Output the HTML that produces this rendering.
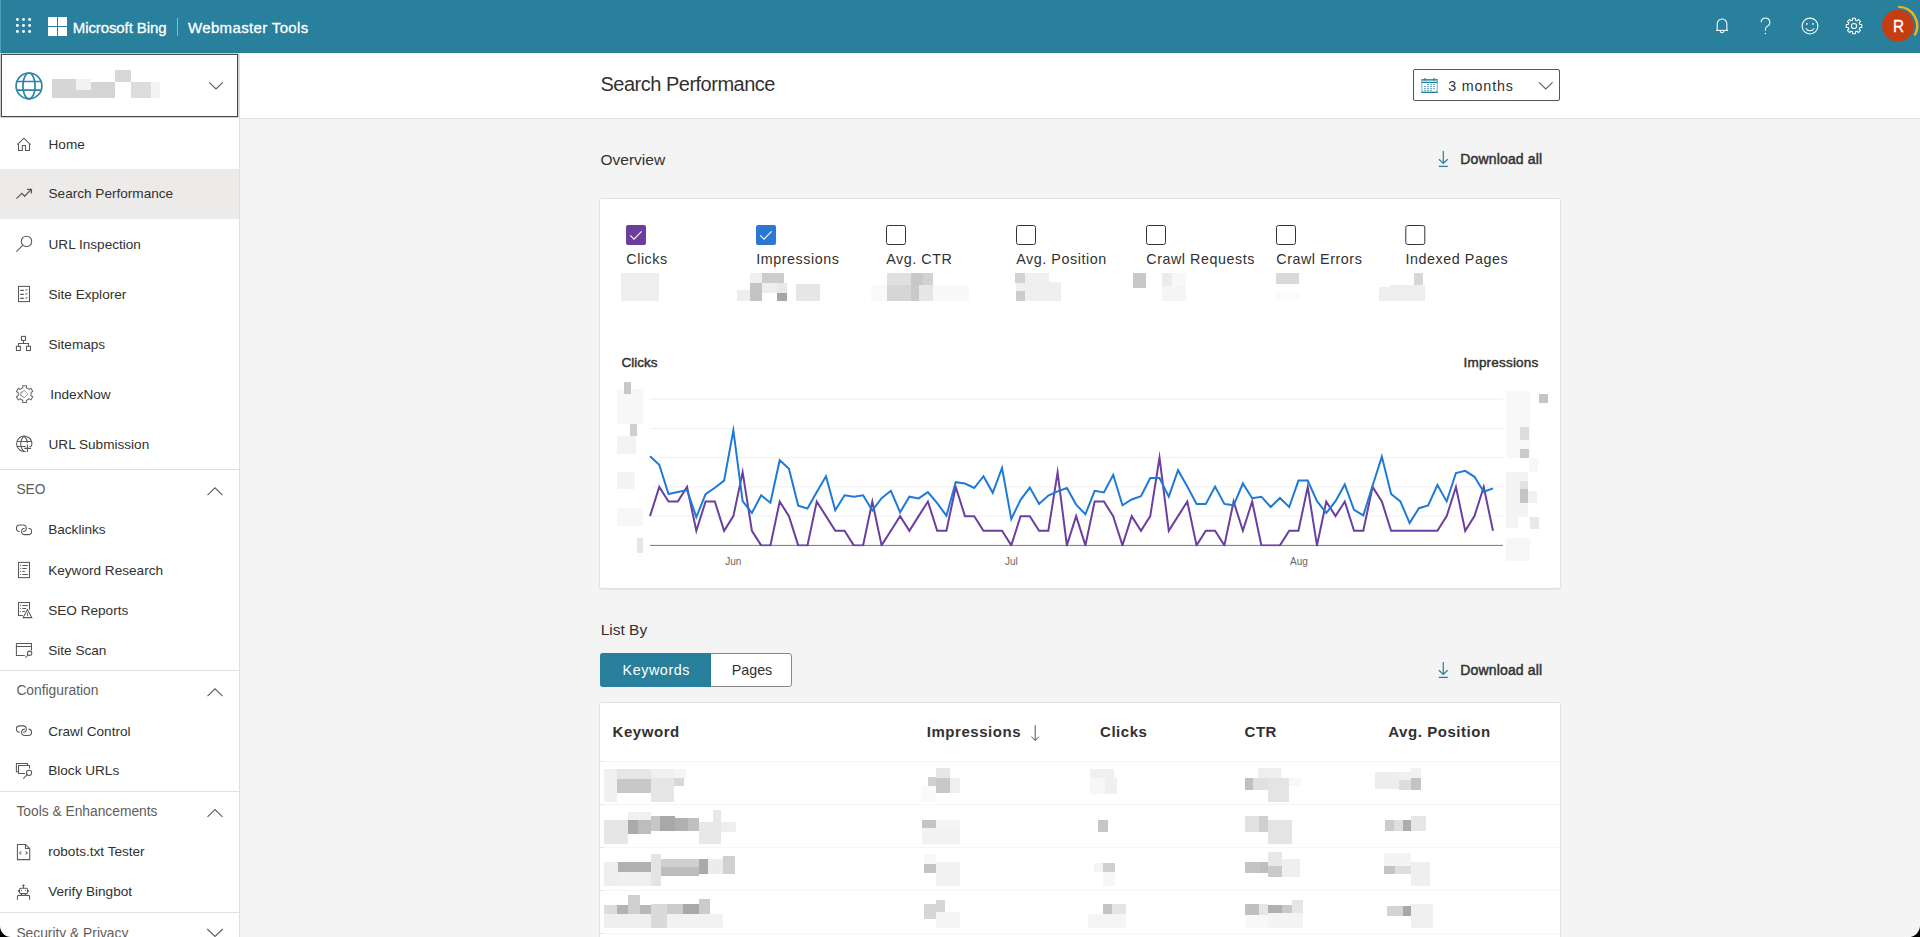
<!DOCTYPE html><html><head><meta charset="utf-8"><style>
html,body{margin:0;padding:0;width:1920px;height:937px;overflow:hidden;background:#f4f4f4;font-family:"Liberation Sans",sans-serif;}
.t{position:absolute;white-space:nowrap;}
.r{position:absolute;}
svg{position:absolute;overflow:visible;}
</style></head><body>
<div class="r" style="left:240px;top:53px;width:1680px;height:65px;background:#ffffff;"></div>
<div class="r" style="left:240px;top:118px;width:1680px;height:1px;background:#e1dfdd;"></div>
<div class="r" style="left:0px;top:0px;width:1920px;height:53px;background:#28809d;"></div>
<div class="r" style="left:0px;top:52px;width:1920px;height:1px;background:#267b96;"></div>
<div class="r" style="left:0px;top:0px;width:1px;height:53px;background:#4e9eb7;"></div>
<svg style="left:0;top:0" width="60" height="53"><circle cx="17.4" cy="19.5" r="1.45" fill="#fff"/><circle cx="17.4" cy="25.5" r="1.45" fill="#fff"/><circle cx="17.4" cy="31.5" r="1.45" fill="#fff"/><circle cx="23.5" cy="19.5" r="1.45" fill="#fff"/><circle cx="23.5" cy="25.5" r="1.45" fill="#fff"/><circle cx="23.5" cy="31.5" r="1.45" fill="#fff"/><circle cx="29.6" cy="19.5" r="1.45" fill="#fff"/><circle cx="29.6" cy="25.5" r="1.45" fill="#fff"/><circle cx="29.6" cy="31.5" r="1.45" fill="#fff"/><rect x="48" y="17" width="9" height="9" fill="#fff"/><rect x="58" y="17" width="9" height="9" fill="#fff"/><rect x="48" y="27" width="9" height="9" fill="#fff"/><rect x="58" y="27" width="9" height="9" fill="#fff"/></svg>
<div class="t" style="left:72.80px;top:19.70px;font-size:15px;line-height:15px;color:#fff;font-weight:400;letter-spacing:-0.1px;-webkit-text-stroke:0.3px #fff;">Microsoft Bing</div>
<div class="r" style="left:177px;top:18px;width:1px;height:18px;background:rgba(255,255,255,0.45);"></div>
<div class="t" style="left:188.00px;top:19.70px;font-size:15px;line-height:15px;color:#fff;font-weight:400;letter-spacing:0.35px;-webkit-text-stroke:0.3px #fff;">Webmaster Tools</div>
<svg style="left:0;top:0" width="1920" height="53">
<g fill="none" stroke="#fff" stroke-width="1.05">
<path d="M1717.2 30.4 V23.9 a4.85 4.85 0 0 1 9.7 0 V30.4"/>
<path d="M1716 30.4 H1728"/>
<path d="M1720.3 30.9 a1.75 1.75 0 0 0 3.5 0"/>
<path d="M1761.2 22.2 a4.3 4.3 0 1 1 6.3 3.9 c-1.3 0.8 -2.1 1.6 -2.1 3.0 v1.7"/>
<circle cx="1810" cy="26" r="7.9"/>
<path d="M1805.8 28.2 a4.8 4.8 0 0 0 8.4 0"/>
</g>
<circle cx="1765.4" cy="33.4" r="0.75" fill="#fff"/>
<circle cx="1806.9" cy="23.9" r="0.85" fill="#fff"/>
<circle cx="1813" cy="23.9" r="0.85" fill="#fff"/>
</svg>
<svg style="left:0;top:0" width="1920" height="53"><path d="M1852.54 20.18 L1852.46 18.25 L1855.54 18.25 L1855.46 20.18 L1857.08 20.85 L1858.39 19.43 L1860.57 21.61 L1859.15 22.92 L1859.82 24.54 L1861.75 24.46 L1861.75 27.54 L1859.82 27.46 L1859.15 29.08 L1860.57 30.39 L1858.39 32.57 L1857.08 31.15 L1855.46 31.82 L1855.54 33.75 L1852.46 33.75 L1852.54 31.82 L1850.92 31.15 L1849.61 32.57 L1847.43 30.39 L1848.85 29.08 L1848.18 27.46 L1846.25 27.54 L1846.25 24.46 L1848.18 24.54 L1848.85 22.92 L1847.43 21.61 L1849.61 19.43 L1850.92 20.85 Z" fill="none" stroke="#fff" stroke-width="1.05" stroke-linejoin="round"/><circle cx="1854" cy="26" r="2.6" fill="none" stroke="#fff" stroke-width="1.05"/><path d="M1898.3 6.9 A19 19 0 0 1 1914.6 35.5" fill="none" stroke="#f5b21a" stroke-width="2.4"/><circle cx="1898" cy="25.7" r="15.9" fill="#c53d10"/></svg>
<div class="t" style="left:1892.60px;top:17.71px;font-size:17px;line-height:17px;color:#fff;font-weight:400;letter-spacing:0px;-webkit-text-stroke:0.35px #fff;transform:scaleX(0.9);transform-origin:0 0;">R</div>
<div class="r" style="left:0px;top:53px;width:239px;height:884px;background:#ffffff;"></div>
<div class="r" style="left:239px;top:53px;width:1px;height:884px;background:#e1dfdd;"></div>
<div class="r" style="left:1px;top:54px;width:235px;height:61px;background:transparent;border:1px solid #4a4a4a;box-shadow:0 0 0 0.6px rgba(74,74,74,0.45);"></div>
<svg style="left:0;top:0" width="240" height="120"><g fill="none" stroke="#2a86a4" stroke-width="1.7"><circle cx="29" cy="85.9" r="12.9"/><ellipse cx="29" cy="85.9" rx="6.1" ry="12.9"/><path d="M17.2 81.5 H40.8 M17.2 90.2 H40.8"/></g><path d="M209.2 82.3 L216 89 L222.8 82.3" fill="none" stroke="#605e5c" stroke-width="1.1"/></svg>
<div class="r" style="left:52.1px;top:79.3px;width:23.7px;height:18.6px;background:#d6d6d6"></div><div class="r" style="left:75.8px;top:79.3px;width:15.2px;height:10.5px;background:#f2f2f2"></div><div class="r" style="left:75.8px;top:89.8px;width:15.2px;height:8.1px;background:#d6d6d6"></div><div class="r" style="left:91px;top:82.2px;width:24.0px;height:15.7px;background:#d4d4d4"></div><div class="r" style="left:115px;top:70.1px;width:16.0px;height:11.9px;background:#d8d8d8"></div><div class="r" style="left:131px;top:82.2px;width:20.0px;height:15.7px;background:#dddddd"></div><div class="r" style="left:151px;top:82.2px;width:9.0px;height:15.7px;background:#f4f4f4"></div>
<div class="r" style="left:0px;top:169px;width:239px;height:50px;background:#edebe9;"></div>
<div class="t" style="left:48.50px;top:137.59px;font-size:13.6px;line-height:13.6px;color:#323130;font-weight:400;letter-spacing:0px;">Home</div>
<div class="t" style="left:48.50px;top:187.19px;font-size:13.6px;line-height:13.6px;color:#323130;font-weight:400;letter-spacing:0px;">Search Performance</div>
<div class="t" style="left:48.50px;top:237.59px;font-size:13.6px;line-height:13.6px;color:#323130;font-weight:400;letter-spacing:0px;">URL Inspection</div>
<div class="t" style="left:48.50px;top:287.59px;font-size:13.6px;line-height:13.6px;color:#323130;font-weight:400;letter-spacing:0px;">Site Explorer</div>
<div class="t" style="left:48.50px;top:337.59px;font-size:13.6px;line-height:13.6px;color:#323130;font-weight:400;letter-spacing:0px;">Sitemaps</div>
<div class="t" style="left:50.20px;top:387.59px;font-size:13.6px;line-height:13.6px;color:#323130;font-weight:400;letter-spacing:0px;">IndexNow</div>
<div class="t" style="left:48.50px;top:437.59px;font-size:13.6px;line-height:13.6px;color:#323130;font-weight:400;letter-spacing:0px;">URL Submission</div>
<div class="r" style="left:0px;top:469px;width:239px;height:1px;background:#e1dfdd;"></div>
<div class="t" style="left:16.40px;top:483.42px;font-size:13.8px;line-height:13.8px;color:#605e5c;font-weight:400;letter-spacing:0px;">SEO</div>
<div class="t" style="left:48.20px;top:523.49px;font-size:13.6px;line-height:13.6px;color:#323130;font-weight:400;letter-spacing:0px;">Backlinks</div>
<div class="t" style="left:48.20px;top:563.79px;font-size:13.6px;line-height:13.6px;color:#323130;font-weight:400;letter-spacing:0px;">Keyword Research</div>
<div class="t" style="left:48.20px;top:603.79px;font-size:13.6px;line-height:13.6px;color:#323130;font-weight:400;letter-spacing:0px;">SEO Reports</div>
<div class="t" style="left:48.20px;top:643.79px;font-size:13.6px;line-height:13.6px;color:#323130;font-weight:400;letter-spacing:0px;">Site Scan</div>
<div class="r" style="left:0px;top:670px;width:239px;height:1px;background:#e1dfdd;"></div>
<div class="t" style="left:16.40px;top:684.22px;font-size:13.8px;line-height:13.8px;color:#605e5c;font-weight:400;letter-spacing:0px;">Configuration</div>
<div class="t" style="left:48.20px;top:724.69px;font-size:13.6px;line-height:13.6px;color:#323130;font-weight:400;letter-spacing:0px;">Crawl Control</div>
<div class="t" style="left:48.20px;top:764.49px;font-size:13.6px;line-height:13.6px;color:#323130;font-weight:400;letter-spacing:0px;">Block URLs</div>
<div class="r" style="left:0px;top:791px;width:239px;height:1px;background:#e1dfdd;"></div>
<div class="t" style="left:16.40px;top:804.92px;font-size:13.8px;line-height:13.8px;color:#605e5c;font-weight:400;letter-spacing:0px;">Tools &amp; Enhancements</div>
<div class="t" style="left:48.20px;top:845.39px;font-size:13.6px;line-height:13.6px;color:#323130;font-weight:400;letter-spacing:0px;">robots.txt Tester</div>
<div class="t" style="left:48.20px;top:885.19px;font-size:13.6px;line-height:13.6px;color:#323130;font-weight:400;letter-spacing:0px;">Verify Bingbot</div>
<div class="r" style="left:0px;top:912px;width:239px;height:1px;background:#e1dfdd;"></div>
<div class="t" style="left:16.40px;top:927.12px;font-size:13.8px;line-height:13.8px;color:#605e5c;font-weight:400;letter-spacing:0px;">Security &amp; Privacy</div>
<svg style="left:0;top:0" width="240" height="937"><g fill="none" stroke="#595959" stroke-width="1.05" stroke-linecap="butt" stroke-linejoin="miter">
<path d="M17.4 144.6 L23.95 138.2 L30.5 144.6"/>
<path d="M18.5 143.4 V150.5 H22.3 V145.4 H25.5 V150.5 H29.5 V143.4"/>
<path d="M16.4 198.6 L21.85 193.4 L24.57 196.2 L31.1 189.6" stroke-width="1.3"/>
<path d="M27 189.3 H31.4 V193.6" stroke-width="1.3"/>
<circle cx="26.5" cy="241.4" r="5.2"/>
<path d="M22.7 245.3 L16.4 251.6"/>
<rect x="18.5" y="286.4" width="11" height="15.2"/>
<path d="M20.2 290.4 H23.8 M20.2 294.4 H23.8 M20.2 298.4 H23.8" stroke-width="1.1"/>
<path d="M25.3 290.5 L27.4 289.2 M25.3 294.5 L27.4 293.2 M25.3 298.5 L27.4 297.2" stroke="#8a8a8a" stroke-width="1.2"/>
<rect x="21.45" y="336.4" width="4.1" height="4"/>
<rect x="16.4" y="346.3" width="4" height="4.2"/>
<rect x="26.5" y="346.3" width="4" height="4.2"/>
<path d="M23.5 340.4 V343.4 M18.5 346.3 V343.4 H28.5 V346.3"/>
<path d="M22.81 387.75 L22.72 385.71 L26.48 385.71 L26.39 387.75 L29.21 389.37 L30.93 388.28 L32.81 391.53 L31.00 392.48 L31.00 395.72 L32.81 396.67 L30.93 399.92 L29.21 398.83 L26.39 400.45 L26.48 402.49 L22.72 402.49 L22.81 400.45 L19.99 398.83 L18.27 399.92 L16.39 396.67 L18.20 395.72 L18.20 392.48 L16.39 391.53 L18.27 388.28 L19.99 389.37 Z" stroke-linejoin="round" stroke="#6a6a6a"/>
<path d="M24 390.2 L28 394.1 L24 398 L20.6 394.1 Z M23.2 391.5 a3 2.6 0 0 0 0 5.2" stroke="#9a9a9a" stroke-width="0.9"/>
<path d="M25.8 451.3 a7.7 7.7 0 1 1 5.7 -4.9"/>
<path d="M24.1 436.1 c-2.2 1.9 -3.4 4.6 -3.4 7.7 c0 3.1 1.3 5.9 3.5 7.8 M24.1 436.1 c2.0 1.7 3.2 4.1 3.4 6.9"/>
<path d="M16.9 441.4 H31.2 M16.9 446.5 H25.6 M29.5 446.5 H31.2"/>
<path d="M27.45 444.5 V452 M24.3 448.4 H31.1" stroke-width="1.1"/>
<path d="M19.8 531.40 H19.6 a3.2 3.2 0 0 1 0 -6.4 H23.1 a3.2 3.2 0 0 1 0 6.4 H23.2" transform="translate(0,0)"/><path d="M24.2 528.20 H24.8 a3.2 3.2 0 0 0 0 6.4 H28.4 a3.2 3.2 0 0 0 0 -6.4 H28.6"/>
<path d="M19.8 732.30 H19.6 a3.2 3.2 0 0 1 0 -6.4 H23.1 a3.2 3.2 0 0 1 0 6.4 H23.2" transform="translate(0,0)"/><path d="M24.2 729.10 H24.8 a3.2 3.2 0 0 0 0 6.4 H28.4 a3.2 3.2 0 0 0 0 -6.4 H28.6"/>
<rect x="18.5" y="562.4" width="11" height="15.2"/>
<path d="M22.3 565.4 H27.8 M22.3 568.5 H26.8 M22.3 571.5 H24.9 M22.3 574.5 H27.8"/>
<path d="M20.0 565.4 h0.8 M20.0 568.5 h0.8 M20.0 571.5 h0.8 M20.0 574.5 h0.8" stroke-width="1.2"/>
<path d="M22.9 615.5 H18.5 V602.4 H29.5 V609.8"/>
<path d="M22.3 605.4 H27.8 M22.3 608.5 H26.2 M22.3 611.5 H24.9"/>
<path d="M20.0 605.4 h0.8 M20.0 608.5 h0.8 M20.0 611.5 h0.8" stroke-width="1.2"/>
<path d="M27.45 609.6 L31.8 617.6 H23.1 Z"/>
<path d="M27.45 612.5 V616.2" stroke-width="0.9"/>
<path d="M24.8 655.5 H16.4 V643.5 H31.5 V650.6 M16.4 646.4 H31.5"/>
<circle cx="29.6" cy="653.3" r="2.2"/>
<path d="M28 655 L25.3 657.7"/>
<path d="M18.5 771.7 H16.4 V763.4 H27.45 V765.4"/>
<path d="M25 773.5 H18.5 V765.4 H29.5 V768.6"/>
<circle cx="29.05" cy="772.8" r="2.6"/>
<path d="M27.2 774.7 L23.3 778.6"/>
<path d="M17.4 859.6 V844.4 H25.5 L29.7 848.5 V859.6 Z M25.4 844.4 V848.4 H29.7"/>
<path d="M21.4 851.4 L19.7 852.9 L21.4 854.4 M25.5 851.4 L27.2 852.9 L25.5 854.4" stroke-width="1.15" stroke="#777"/>
<path d="M23.45 888.2 V884.6 M22.2 885.5 H24.7"/>
<rect x="19.5" y="888.2" width="8" height="5.3" rx="1.3"/>
<path d="M19.0 889.9 V891.9 M27.9 889.9 V891.9" stroke-width="1.7"/>
<circle cx="21.5" cy="890.5" r="0.6" fill="#595959" stroke="none"/>
<circle cx="25.5" cy="890.5" r="0.6" fill="#595959" stroke="none"/>
<path d="M21.6 893.5 V895.4 M25.4 893.5 V895.4"/>
<path d="M17.45 899.8 V896.6 a1.2 1.2 0 0 1 1.2 -1.2 H28.4 a1.2 1.2 0 0 1 1.2 1.2 V899.8"/>
</g>
<g fill="none" stroke="#605e5c" stroke-width="1.1">
<path d="M207.5 495.2 L215 487.8 L222.5 495.2"/>
<path d="M207.5 696.2 L215 688.8 L222.5 696.2"/>
<path d="M207.5 816.9 L215 809.5 L222.5 816.9"/>
<path d="M207.2 929 L215 936.5 L222.8 929"/>
</g>
<path d="M0 926 A11 11 0 0 0 11 937 H0 Z" fill="#000"/>
</svg>
<div class="t" style="left:600.50px;top:74.17px;font-size:20px;line-height:20px;color:#323130;font-weight:400;letter-spacing:-0.5px;">Search Performance</div>
<div class="r" style="left:1413px;top:69px;width:145px;height:30px;background:#fff;border:1px solid #555;border-radius:2px;"></div>
<svg style="left:0;top:0" width="1920" height="200"><g fill="none" stroke="#2a7f9e"><rect x="1421.9" y="79.8" width="15.3" height="12.4" stroke="#6fb1c7" stroke-width="1"/><path d="M1421.4 79.8 H1437.8 M1421.6 82.4 H1437.6 M1421.4 92.3 H1437.8" stroke-width="1.3"/><path d="M1425 78.3 V80.5 M1434 78.3 V80.5" stroke-width="1.6"/></g><g fill="#5fa9c2"><rect x="1427.1" y="83.95" width="1.8" height="1.1"/><rect x="1430.1" y="83.95" width="1.8" height="1.1"/><rect x="1433.1" y="83.95" width="1.8" height="1.1"/><rect x="1424.1" y="85.95" width="1.8" height="1.1"/><rect x="1427.1" y="85.95" width="1.8" height="1.1"/><rect x="1430.1" y="85.95" width="1.8" height="1.1"/><rect x="1433.1" y="85.95" width="1.8" height="1.1"/><rect x="1424.1" y="87.95" width="1.8" height="1.1"/><rect x="1427.1" y="87.95" width="1.8" height="1.1"/><rect x="1430.1" y="87.95" width="1.8" height="1.1"/><rect x="1433.1" y="87.95" width="1.8" height="1.1"/><rect x="1424.1" y="89.85000000000001" width="1.8" height="1.1"/><rect x="1427.1" y="89.85000000000001" width="1.8" height="1.1"/><rect x="1430.1" y="89.85000000000001" width="1.8" height="1.1"/></g><path d="M1539 82.3 L1545.8 89 L1552.6 82.3" fill="none" stroke="#605e5c" stroke-width="1.1"/><g fill="none" stroke="#2a7f9e" stroke-width="1.2"><path d="M1443.3 150.9 V163 M1438.9 159.2 L1443.3 163.4 L1447.7 159.2"/><path d="M1438.8 166.4 H1447.8" stroke-width="1.3"/></g><g fill="none" stroke="#2a7f9e" stroke-width="1.2"><path d="M1443.3 661.9 V674 M1438.9 670.2 L1443.3 674.4 L1447.7 670.2"/><path d="M1438.8 677.4 H1447.8" stroke-width="1.3"/></g></svg>
<div class="t" style="left:1448.20px;top:78.70px;font-size:14.3px;line-height:14.3px;color:#323130;font-weight:400;letter-spacing:0.85px;">3 months</div>
<div class="t" style="left:600.50px;top:151.88px;font-size:15.5px;line-height:15.5px;color:#323130;font-weight:400;letter-spacing:0px;">Overview</div>
<div class="t" style="left:1460.30px;top:152.35px;font-size:14px;line-height:14px;color:#323130;font-weight:400;letter-spacing:0.15px;-webkit-text-stroke:0.45px #323130;">Download all</div>
<div class="r" style="left:599px;top:198px;width:960px;height:389px;background:#fff;border:1px solid #e2e2e2;border-radius:2.5px;box-shadow:0 1px 1.5px rgba(0,0,0,.05);"></div>
<div class="t" style="left:626.30px;top:252.00px;font-size:14.3px;line-height:14.3px;color:#323130;font-weight:400;letter-spacing:0.55px;">Clicks</div>
<div class="t" style="left:756.30px;top:252.00px;font-size:14.3px;line-height:14.3px;color:#323130;font-weight:400;letter-spacing:0.55px;">Impressions</div>
<div class="t" style="left:886.30px;top:252.00px;font-size:14.3px;line-height:14.3px;color:#323130;font-weight:400;letter-spacing:0.55px;">Avg. CTR</div>
<div class="t" style="left:1016.30px;top:252.00px;font-size:14.3px;line-height:14.3px;color:#323130;font-weight:400;letter-spacing:0.55px;">Avg. Position</div>
<div class="t" style="left:1146.30px;top:252.00px;font-size:14.3px;line-height:14.3px;color:#323130;font-weight:400;letter-spacing:0.55px;">Crawl Requests</div>
<div class="t" style="left:1276.30px;top:252.00px;font-size:14.3px;line-height:14.3px;color:#323130;font-weight:400;letter-spacing:0.55px;">Crawl Errors</div>
<div class="t" style="left:1405.60px;top:252.00px;font-size:14.3px;line-height:14.3px;color:#323130;font-weight:400;letter-spacing:0.55px;">Indexed Pages</div>
<svg style="left:0;top:0" width="1920" height="300"><rect x="626" y="225" width="20" height="20" rx="2" fill="#6a3d9f"/><path d="M630.2 235.4 L634 239.1 L641.6 231.4" fill="none" stroke="#fff" stroke-width="1.1"/><rect x="756" y="225" width="20" height="20" rx="2" fill="#2b78d4"/><path d="M760.2 235.4 L764 239.1 L771.6 231.4" fill="none" stroke="#fff" stroke-width="1.1"/><rect x="886.5" y="225.5" width="19" height="19" rx="2" fill="none" stroke="#333" stroke-width="1"/><rect x="1016.5" y="225.5" width="19" height="19" rx="2" fill="none" stroke="#333" stroke-width="1"/><rect x="1146.5" y="225.5" width="19" height="19" rx="2" fill="none" stroke="#333" stroke-width="1"/><rect x="1276.5" y="225.5" width="19" height="19" rx="2" fill="none" stroke="#333" stroke-width="1"/><rect x="1405.8" y="225.5" width="19" height="19" rx="2" fill="none" stroke="#333" stroke-width="1"/></svg>
<div class="r" style="left:621px;top:273px;width:38.0px;height:28.0px;background:#eeeeee"></div><div class="r" style="left:737px;top:290px;width:13.0px;height:11.0px;background:#eeeeee"></div><div class="r" style="left:750px;top:273px;width:12.0px;height:10.0px;background:#efefef"></div><div class="r" style="left:762px;top:273px;width:22.0px;height:10.0px;background:#cccccc"></div><div class="r" style="left:750px;top:283px;width:12.0px;height:18.0px;background:#c4c4c4"></div><div class="r" style="left:762px;top:283px;width:15.0px;height:10.0px;background:#eeeeee"></div><div class="r" style="left:777px;top:283px;width:10.0px;height:10.0px;background:#e8e8e8"></div><div class="r" style="left:777px;top:293px;width:10.0px;height:8.0px;background:#a5a5a5"></div><div class="r" style="left:796px;top:284px;width:24.0px;height:17.0px;background:#e6e6e6"></div><div class="r" style="left:871px;top:284.5px;width:16.0px;height:16.5px;background:#fafafa"></div><div class="r" style="left:887px;top:273px;width:24.0px;height:11.5px;background:#e0e0e0"></div><div class="r" style="left:887px;top:284.5px;width:24.0px;height:16.5px;background:#d6d6d6"></div><div class="r" style="left:911px;top:273px;width:11.8px;height:11.5px;background:#c8c8c8"></div><div class="r" style="left:922.8px;top:273px;width:10.2px;height:11.5px;background:#d2d2d2"></div><div class="r" style="left:911px;top:284.5px;width:8.0px;height:16.5px;background:#c9c9c9"></div><div class="r" style="left:919px;top:284.5px;width:14.0px;height:16.5px;background:#e6e6e6"></div><div class="r" style="left:933px;top:285px;width:36.0px;height:16.0px;background:#f9f9f9"></div><div class="r" style="left:1016px;top:282px;width:45.0px;height:19.0px;background:#efefef"></div><div class="r" style="left:1025px;top:273px;width:24.0px;height:9.0px;background:#efefef"></div><div class="r" style="left:1015px;top:273px;width:10.0px;height:9.8px;background:#d2d2d2"></div><div class="r" style="left:1016px;top:291px;width:9.0px;height:10.0px;background:#cccccc"></div><div class="r" style="left:1133px;top:273px;width:13.0px;height:15.0px;background:#c8c8c8"></div><div class="r" style="left:1162px;top:286px;width:24.0px;height:15.0px;background:#f5f5f5"></div><div class="r" style="left:1172px;top:273px;width:14.0px;height:13.0px;background:#f8f8f8"></div><div class="r" style="left:1162px;top:273px;width:10.0px;height:13.0px;background:#ececec"></div><div class="r" style="left:1276px;top:273px;width:23.0px;height:11.0px;background:#d9d9d9"></div><div class="r" style="left:1276px;top:291px;width:23.0px;height:10.0px;background:#fbfbfb"></div><div class="r" style="left:1379px;top:287px;width:46.0px;height:14.0px;background:#eeeeee"></div><div class="r" style="left:1390px;top:285px;width:35.0px;height:2.0px;background:#efefef"></div><div class="r" style="left:1414px;top:273px;width:9.0px;height:12.0px;background:#d6d6d6"></div>
<div class="t" style="left:621.40px;top:355.57px;font-size:13.5px;line-height:13.5px;color:#323130;font-weight:400;letter-spacing:0px;-webkit-text-stroke:0.45px #323130;">Clicks</div>
<div class="t" style="left:1463.50px;top:355.57px;font-size:13.5px;line-height:13.5px;color:#323130;font-weight:400;letter-spacing:0.2px;-webkit-text-stroke:0.45px #323130;">Impressions</div>
<div class="r" style="left:617px;top:389px;width:26.0px;height:34.6px;background:#f7f7f7"></div><div class="r" style="left:624.2px;top:382px;width:6.7px;height:11.6px;background:#c8c8c8"></div><div class="r" style="left:630px;top:423.6px;width:7.0px;height:12.1px;background:#cfcfcf"></div><div class="r" style="left:617px;top:435.7px;width:19.4px;height:18.3px;background:#f3f3f3"></div><div class="r" style="left:617px;top:471.8px;width:18.0px;height:17.6px;background:#f4f4f4"></div><div class="r" style="left:617px;top:507.6px;width:26.0px;height:18.2px;background:#f7f7f7"></div><div class="r" style="left:637px;top:538px;width:6.0px;height:14.7px;background:#e6e6e6"></div><div class="r" style="left:1506px;top:391px;width:23.5px;height:67.0px;background:#f8f8f8"></div><div class="r" style="left:1539.2px;top:394.2px;width:8.9px;height:8.5px;background:#c4c4c4"></div><div class="r" style="left:1520px;top:427px;width:9.0px;height:12.8px;background:#dcdcdc"></div><div class="r" style="left:1520px;top:449px;width:9.0px;height:9.0px;background:#cacaca"></div><div class="r" style="left:1529px;top:458px;width:9.0px;height:14.0px;background:#f7f7f7"></div><div class="r" style="left:1506px;top:472px;width:22.4px;height:44.8px;background:#f4f4f4"></div><div class="r" style="left:1520px;top:481px;width:7.8px;height:8.0px;background:#e2e2e2"></div><div class="r" style="left:1520px;top:489px;width:7.8px;height:13.6px;background:#c4c4c4"></div><div class="r" style="left:1528.4px;top:491px;width:8.6px;height:11.6px;background:#f1f1f1"></div><div class="r" style="left:1506px;top:516.8px;width:11.7px;height:11.2px;background:#f3f3f3"></div><div class="r" style="left:1530px;top:516.8px;width:9.0px;height:12.2px;background:#e8e8e8"></div><div class="r" style="left:1506px;top:538px;width:24.0px;height:23.4px;background:#f7f7f7"></div>
<svg style="left:0;top:0" width="1920" height="937"><line x1="650" y1="399.2" x2="1503" y2="399.2" stroke="#f0f0f0" stroke-width="1"/><line x1="650" y1="428.4" x2="1503" y2="428.4" stroke="#f0f0f0" stroke-width="1"/><line x1="650" y1="457.6" x2="1503" y2="457.6" stroke="#f0f0f0" stroke-width="1"/><line x1="650" y1="486.8" x2="1503" y2="486.8" stroke="#f0f0f0" stroke-width="1"/><line x1="650" y1="516.0" x2="1503" y2="516.0" stroke="#f0f0f0" stroke-width="1"/><line x1="650" y1="545.4" x2="1503" y2="545.4" stroke="#777" stroke-width="1"/><defs><clipPath id="plot"><rect x="600" y="380" width="960" height="166.2"/></clipPath></defs><polyline clip-path="url(#plot)" points="650.00,516.16 659.26,486.92 668.53,501.54 677.79,501.54 687.05,486.92 696.32,530.78 705.58,501.54 714.85,501.54 724.11,530.78 733.37,516.16 742.64,472.30 751.90,530.78 761.16,545.40 770.43,545.40 779.69,501.54 788.96,516.16 798.22,545.40 807.48,545.40 816.75,501.54 826.01,516.16 835.27,530.78 844.54,530.78 853.80,545.40 863.07,545.40 872.33,501.54 881.59,545.40 890.86,530.78 900.12,516.16 909.38,530.78 918.65,516.16 927.91,501.54 937.18,530.78 946.44,530.78 955.70,486.92 964.97,516.16 974.23,516.16 983.49,530.78 992.76,530.78 1002.02,530.78 1011.29,545.40 1020.55,516.16 1029.81,516.16 1039.08,530.78 1048.34,530.78 1057.60,472.30 1066.87,545.40 1076.13,516.16 1085.40,545.40 1094.66,501.54 1103.92,501.54 1113.19,516.16 1122.45,545.40 1131.71,516.16 1140.98,530.78 1150.24,516.16 1159.51,457.68 1168.77,530.78 1178.03,516.16 1187.30,501.54 1196.56,545.40 1205.82,530.78 1215.09,530.78 1224.35,545.40 1233.62,501.54 1242.88,530.78 1252.14,501.54 1261.41,545.40 1270.67,545.40 1279.93,545.40 1289.20,530.78 1298.46,530.78 1307.73,486.92 1316.99,545.40 1326.25,501.54 1335.52,516.16 1344.78,501.54 1354.04,530.78 1363.31,530.78 1372.57,486.92 1381.84,501.54 1391.10,530.78 1400.36,530.78 1409.63,530.78 1418.89,530.78 1428.15,530.78 1437.42,530.78 1446.68,516.16 1455.95,486.92 1465.21,530.78 1474.47,516.16 1483.74,486.92 1493.00,530.78" fill="none" stroke="#6b3fa0" stroke-width="2" stroke-linejoin="miter" stroke-miterlimit="10"/><polyline clip-path="url(#plot)" points="650.00,456.30 659.26,464.70 668.53,494.00 677.79,492.10 687.05,490.10 696.32,517.10 705.58,494.20 714.85,487.70 724.11,480.60 733.37,430.40 742.64,501.20 751.90,513.00 761.16,495.30 770.43,502.80 779.69,460.20 788.96,468.80 798.22,505.60 807.48,508.50 816.75,492.10 826.01,476.20 835.27,510.20 844.54,495.30 853.80,496.70 863.07,495.30 872.33,510.50 881.59,498.10 890.86,490.80 900.12,512.30 909.38,496.70 918.65,498.40 927.91,492.10 937.18,503.20 946.44,515.70 955.70,482.20 964.97,483.50 974.23,488.00 983.49,476.20 992.76,492.80 1002.02,467.90 1011.29,519.00 1020.55,499.80 1029.81,487.60 1039.08,503.90 1048.34,495.60 1057.60,491.40 1066.87,488.00 1076.13,504.60 1085.40,514.30 1094.66,490.80 1103.92,492.40 1113.19,474.80 1122.45,505.30 1131.71,499.50 1140.98,496.30 1150.24,478.00 1159.51,478.00 1168.77,496.70 1178.03,470.20 1187.30,486.60 1196.56,503.90 1205.82,503.90 1215.09,486.60 1224.35,503.90 1233.62,505.30 1242.88,483.50 1252.14,498.20 1261.41,496.70 1270.67,507.00 1279.93,498.00 1289.20,507.00 1298.46,480.60 1307.73,480.60 1316.99,501.20 1326.25,513.00 1335.52,501.20 1344.78,484.50 1354.04,509.90 1363.31,515.40 1372.57,485.70 1381.84,456.60 1391.10,494.00 1400.36,501.40 1409.63,523.10 1418.89,508.20 1428.15,505.50 1437.42,485.00 1446.68,501.40 1455.95,473.00 1465.21,470.80 1474.47,476.80 1483.74,491.70 1493.00,488.40" fill="none" stroke="#1f7ad6" stroke-width="2" stroke-linejoin="miter" stroke-miterlimit="10"/></svg>
<div class="t" style="left:725.30px;top:556.74px;font-size:10px;line-height:10px;color:#666;font-weight:400;letter-spacing:0px;">Jun</div>
<div class="t" style="left:1004.90px;top:556.74px;font-size:10px;line-height:10px;color:#666;font-weight:400;letter-spacing:0px;">Jul</div>
<div class="t" style="left:1290.00px;top:556.74px;font-size:10px;line-height:10px;color:#666;font-weight:400;letter-spacing:0px;">Aug</div>
<div class="t" style="left:600.70px;top:622.08px;font-size:15.5px;line-height:15.5px;color:#323130;font-weight:400;letter-spacing:0px;">List By</div>
<div class="r" style="left:600px;top:653px;width:192px;height:34px;background:#fff;box-sizing:border-box;border:1px solid #8a8886;border-radius:3px;"></div>
<div class="r" style="left:600px;top:653px;width:111px;height:34px;background:#28809d;border-radius:3px 0 0 3px;"></div>
<div class="t" style="left:622.50px;top:662.80px;font-size:14.3px;line-height:14.3px;color:#fff;font-weight:400;letter-spacing:0.6px;">Keywords</div>
<div class="t" style="left:731.70px;top:662.80px;font-size:14.3px;line-height:14.3px;color:#323130;font-weight:400;letter-spacing:0px;">Pages</div>
<div class="t" style="left:1460.30px;top:663.35px;font-size:14px;line-height:14px;color:#323130;font-weight:400;letter-spacing:0.15px;-webkit-text-stroke:0.45px #323130;">Download all</div>
<div class="r" style="left:599px;top:702px;width:960px;height:260px;background:#fff;border:1px solid #e2e2e2;border-radius:2.5px;box-shadow:0 1px 1.5px rgba(0,0,0,.05);"></div>
<div class="t" style="left:612.60px;top:723.70px;font-size:15px;line-height:15px;color:#323130;font-weight:700;letter-spacing:0.55px;">Keyword</div>
<div class="t" style="left:926.70px;top:723.70px;font-size:15px;line-height:15px;color:#323130;font-weight:700;letter-spacing:0.55px;">Impressions</div>
<div class="t" style="left:1100.00px;top:723.70px;font-size:15px;line-height:15px;color:#323130;font-weight:700;letter-spacing:0.55px;">Clicks</div>
<div class="t" style="left:1244.50px;top:723.70px;font-size:15px;line-height:15px;color:#323130;font-weight:700;letter-spacing:0.55px;">CTR</div>
<div class="t" style="left:1388.30px;top:723.70px;font-size:15px;line-height:15px;color:#323130;font-weight:700;letter-spacing:0.55px;">Avg. Position</div>
<svg style="left:0;top:0" width="1920" height="937"><path d="M1035.2 725.2 V740.3 M1031.5 736.6 L1035.2 740.5 L1038.9 736.6" fill="none" stroke="#555" stroke-width="1"/></svg>
<div class="r" style="left:600px;top:761px;width:960px;height:1px;background:#f6f6f6;"></div>
<div class="r" style="left:600px;top:761px;width:5px;height:1px;background:#e6e6e6;"></div>
<div class="r" style="left:600px;top:804px;width:960px;height:1px;background:#f6f6f6;"></div>
<div class="r" style="left:600px;top:804px;width:5px;height:1px;background:#e6e6e6;"></div>
<div class="r" style="left:600px;top:847px;width:960px;height:1px;background:#f6f6f6;"></div>
<div class="r" style="left:600px;top:847px;width:5px;height:1px;background:#e6e6e6;"></div>
<div class="r" style="left:600px;top:890px;width:960px;height:1px;background:#f6f6f6;"></div>
<div class="r" style="left:600px;top:890px;width:5px;height:1px;background:#e6e6e6;"></div>
<div class="r" style="left:600px;top:933px;width:960px;height:1px;background:#f6f6f6;"></div>
<div class="r" style="left:600px;top:933px;width:5px;height:1px;background:#e6e6e6;"></div>
<div class="r" style="left:604.2px;top:768.5px;width:12.8px;height:33.1px;background:#f0f0f0"></div><div class="r" style="left:617px;top:768.5px;width:34.0px;height:10.5px;background:#e6e6e6"></div><div class="r" style="left:617px;top:779px;width:34.0px;height:13.5px;background:#c8c8c8"></div><div class="r" style="left:651px;top:768.5px;width:22.7px;height:9.5px;background:#f0f0f0"></div><div class="r" style="left:651px;top:778px;width:22.7px;height:23.6px;background:#e6e6e6"></div><div class="r" style="left:673.7px;top:778px;width:10.3px;height:8.4px;background:#d8d8d8"></div><div class="r" style="left:673.7px;top:768.5px;width:12.3px;height:9.5px;background:#f5f5f5"></div><div class="r" style="left:604.2px;top:820.4px;width:23.8px;height:23.3px;background:#e6e6e6"></div><div class="r" style="left:628px;top:820px;width:9.8px;height:13.7px;background:#aaaaaa"></div><div class="r" style="left:637.8px;top:820px;width:13.2px;height:13.7px;background:#bdbdbd"></div><div class="r" style="left:628px;top:812px;width:23.0px;height:8.0px;background:#f0f0f0"></div><div class="r" style="left:651px;top:815.7px;width:9.0px;height:15.1px;background:#c6c6c6"></div><div class="r" style="left:660px;top:815.7px;width:15.0px;height:15.1px;background:#a8a8a8"></div><div class="r" style="left:675px;top:818px;width:13.4px;height:12.8px;background:#b0b0b0"></div><div class="r" style="left:688.4px;top:818px;width:10.8px;height:12.8px;background:#c0c0c0"></div><div class="r" style="left:699.2px;top:822px;width:21.8px;height:21.7px;background:#e8e8e8"></div><div class="r" style="left:713px;top:810px;width:8.0px;height:12.0px;background:#e8e8e8"></div><div class="r" style="left:721px;top:822px;width:15.0px;height:9.8px;background:#eeeeee"></div><div class="r" style="left:604.2px;top:862px;width:13.8px;height:23.6px;background:#eeeeee"></div><div class="r" style="left:618px;top:862px;width:33.0px;height:9.8px;background:#b0b0b0"></div><div class="r" style="left:618px;top:871.8px;width:33.0px;height:13.8px;background:#f0f0f0"></div><div class="r" style="left:651px;top:854px;width:9.8px;height:31.6px;background:#e4e4e4"></div><div class="r" style="left:660.8px;top:859px;width:38.4px;height:8.3px;background:#d0d0d0"></div><div class="r" style="left:660.8px;top:867.3px;width:38.4px;height:8.3px;background:#bdbdbd"></div><div class="r" style="left:699.2px;top:859px;width:8.8px;height:14.7px;background:#aaaaaa"></div><div class="r" style="left:708px;top:859px;width:15.0px;height:14.7px;background:#ececec"></div><div class="r" style="left:723px;top:856.3px;width:12.0px;height:17.4px;background:#d0d0d0"></div><div class="r" style="left:604px;top:905px;width:13.0px;height:9.0px;background:#dcdcdc"></div><div class="r" style="left:617px;top:905px;width:11.0px;height:9.0px;background:#b4b4b4"></div><div class="r" style="left:628px;top:895px;width:12.0px;height:19.0px;background:#d0d0d0"></div><div class="r" style="left:640px;top:905px;width:11.0px;height:9.0px;background:#b8b8b8"></div><div class="r" style="left:604px;top:914px;width:47.0px;height:13.7px;background:#efefef"></div><div class="r" style="left:651px;top:904px;width:16.0px;height:23.7px;background:#dadada"></div><div class="r" style="left:667px;top:904px;width:16.0px;height:10.0px;background:#cccccc"></div><div class="r" style="left:683px;top:904px;width:16.0px;height:10.0px;background:#a8a8a8"></div><div class="r" style="left:699px;top:899px;width:11.0px;height:15.0px;background:#cccccc"></div><div class="r" style="left:667px;top:914px;width:55.8px;height:13.7px;background:#f2f2f2"></div><div class="r" style="left:936px;top:768px;width:14.0px;height:10.0px;background:#e6e6e6"></div><div class="r" style="left:928px;top:777px;width:8.0px;height:9.0px;background:#d0d0d0"></div><div class="r" style="left:936px;top:778px;width:14.0px;height:14.5px;background:#c8c8c8"></div><div class="r" style="left:950px;top:778px;width:10.0px;height:14.5px;background:#f0f0f0"></div><div class="r" style="left:921px;top:786px;width:15.0px;height:15.5px;background:#fafafa"></div><div class="r" style="left:922px;top:828px;width:38.0px;height:15.7px;background:#f2f2f2"></div><div class="r" style="left:936px;top:820px;width:24.0px;height:8.0px;background:#f4f4f4"></div><div class="r" style="left:922px;top:820px;width:14.0px;height:8.0px;background:#c4c4c4"></div><div class="r" style="left:924px;top:854px;width:12.0px;height:10.0px;background:#f8f8f8"></div><div class="r" style="left:924px;top:864px;width:12.0px;height:9.0px;background:#c4c4c4"></div><div class="r" style="left:936px;top:862px;width:24.0px;height:23.6px;background:#f2f2f2"></div><div class="r" style="left:924px;top:904px;width:12.0px;height:14.6px;background:#d6d6d6"></div><div class="r" style="left:936px;top:900px;width:9.0px;height:12.0px;background:#d6d6d6"></div><div class="r" style="left:936px;top:912px;width:24.0px;height:15.7px;background:#f5f5f5"></div><div class="r" style="left:1090px;top:768.5px;width:24.0px;height:9.5px;background:#f0f0f0"></div><div class="r" style="left:1090px;top:778px;width:14.5px;height:16.0px;background:#f7f7f7"></div><div class="r" style="left:1104.5px;top:778px;width:12.5px;height:16.0px;background:#f0f0f0"></div><div class="r" style="left:1098px;top:820px;width:10.0px;height:11.8px;background:#c6c6c6"></div><div class="r" style="left:1094px;top:863px;width:9.0px;height:9.0px;background:#f4f4f4"></div><div class="r" style="left:1103px;top:863px;width:12.0px;height:9.0px;background:#d0d0d0"></div><div class="r" style="left:1103px;top:872px;width:12.0px;height:13.6px;background:#f7f7f7"></div><div class="r" style="left:1088px;top:914px;width:38.0px;height:13.7px;background:#f5f5f5"></div><div class="r" style="left:1103px;top:904px;width:9.0px;height:10.0px;background:#c4c4c4"></div><div class="r" style="left:1112px;top:904px;width:14.0px;height:10.0px;background:#e4e4e4"></div><div class="r" style="left:1258px;top:768px;width:23.0px;height:10.0px;background:#eeeeee"></div><div class="r" style="left:1245px;top:778px;width:8.0px;height:12.0px;background:#c0c0c0"></div><div class="r" style="left:1253px;top:778px;width:15.0px;height:12.0px;background:#e0e0e0"></div><div class="r" style="left:1268px;top:778px;width:21.0px;height:23.5px;background:#e4e4e4"></div><div class="r" style="left:1289px;top:778px;width:13.0px;height:8.4px;background:#f8f8f8"></div><div class="r" style="left:1245px;top:816px;width:14.0px;height:16.0px;background:#e2e2e2"></div><div class="r" style="left:1259px;top:816px;width:9.0px;height:16.0px;background:#cfcfcf"></div><div class="r" style="left:1268px;top:820px;width:24.0px;height:23.7px;background:#e4e4e4"></div><div class="r" style="left:1245px;top:862px;width:15.0px;height:11.0px;background:#c4c4c4"></div><div class="r" style="left:1260px;top:862px;width:8.0px;height:11.0px;background:#bebebe"></div><div class="r" style="left:1268px;top:852px;width:14.0px;height:14.0px;background:#e8e8e8"></div><div class="r" style="left:1268px;top:866px;width:14.0px;height:10.7px;background:#cacaca"></div><div class="r" style="left:1282px;top:859px;width:18.0px;height:17.7px;background:#efefef"></div><div class="r" style="left:1245px;top:904px;width:14.0px;height:10.5px;background:#c0c0c0"></div><div class="r" style="left:1259px;top:904px;width:9.0px;height:10.5px;background:#e6e6e6"></div><div class="r" style="left:1268px;top:905px;width:14.0px;height:8.0px;background:#b0b0b0"></div><div class="r" style="left:1282px;top:905px;width:10.0px;height:8.0px;background:#c8c8c8"></div><div class="r" style="left:1292px;top:900px;width:10.7px;height:13.0px;background:#e6e6e6"></div><div class="r" style="left:1268px;top:913px;width:34.7px;height:14.7px;background:#f4f4f4"></div><div class="r" style="left:1245px;top:914.5px;width:23.0px;height:13.2px;background:#f8f8f8"></div><div class="r" style="left:1375px;top:771.7px;width:24.0px;height:17.0px;background:#ededed"></div><div class="r" style="left:1399px;top:780px;width:12.0px;height:10.0px;background:#dddddd"></div><div class="r" style="left:1411px;top:778px;width:9.8px;height:12.0px;background:#c4c4c4"></div><div class="r" style="left:1411px;top:768px;width:9.8px;height:10.0px;background:#f2f2f2"></div><div class="r" style="left:1399px;top:771.7px;width:12.0px;height:8.3px;background:#f0f0f0"></div><div class="r" style="left:1385px;top:820px;width:9.0px;height:10.8px;background:#cccccc"></div><div class="r" style="left:1394px;top:820px;width:9.0px;height:10.8px;background:#dedede"></div><div class="r" style="left:1403px;top:820px;width:8.0px;height:10.8px;background:#acacac"></div><div class="r" style="left:1411px;top:816px;width:15.0px;height:14.8px;background:#e6e6e6"></div><div class="r" style="left:1384px;top:853px;width:27.0px;height:13.0px;background:#f4f4f4"></div><div class="r" style="left:1384px;top:866px;width:11.0px;height:7.7px;background:#c4c4c4"></div><div class="r" style="left:1395px;top:866px;width:16.0px;height:7.7px;background:#dedede"></div><div class="r" style="left:1411px;top:862px;width:19.0px;height:23.6px;background:#efefef"></div><div class="r" style="left:1387px;top:906px;width:16.0px;height:10.0px;background:#d4d4d4"></div><div class="r" style="left:1403px;top:906px;width:8.0px;height:10.0px;background:#a8a8a8"></div><div class="r" style="left:1411px;top:904px;width:22.0px;height:23.7px;background:#f0f0f0"></div>
<svg style="left:0;top:0" width="1920" height="937"><path d="M1920 925.5 A11.5 11.5 0 0 1 1908.5 937 H1920 Z" fill="#000"/></svg>
</body></html>
